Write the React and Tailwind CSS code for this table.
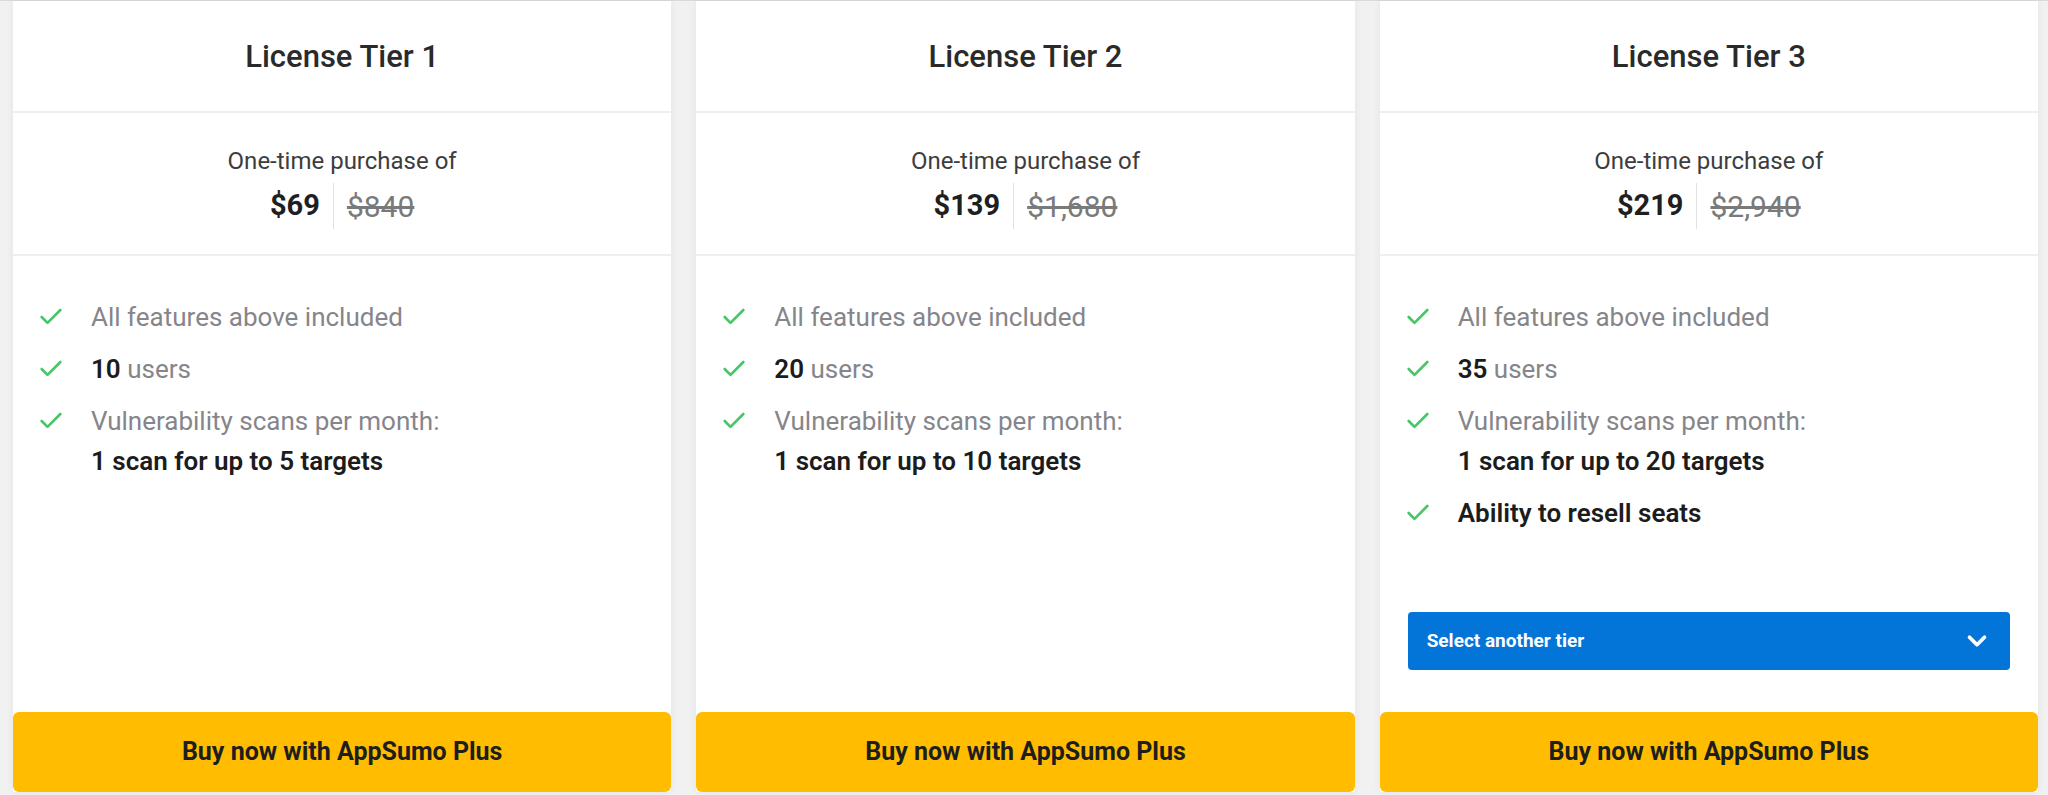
import { Check, ChevronDown } from 'lucide-react';

const tiers = [
  {
    name: 'License Tier 1',
    price: '$69',
    was: '$840',
    users: '10',
    scans: '1 scan for up to 5 targets',
  },
  {
    name: 'License Tier 2',
    price: '$139',
    was: '$1,680',
    users: '20',
    scans: '1 scan for up to 10 targets',
  },
  {
    name: 'License Tier 3',
    price: '$219',
    was: '$2,940',
    users: '35',
    scans: '1 scan for up to 20 targets',
    resell: true,
    select: true,
  },
];

const Feature = ({ children }) => (
  <li className="flex items-start">
    <Check className="w-[28px] h-[28px] mt-[6px] ml-[24px] text-[#45c765] shrink-0" strokeWidth={2.25} />
    <div className="ml-[26px] leading-[40px]">{children}</div>
  </li>
);

const TierCard = ({ tier }) => (
  <div className="flex-1 flex flex-col bg-white shadow-[0_0_8px_rgba(0,0,0,0.06)]">
    <div className="h-[112px] flex items-center justify-center border-b-2 border-[#efefef]">
      <h2 className="text-[31px] font-medium text-[#2a2a2a] mt-[2px]">{tier.name}</h2>
    </div>

    <div className="h-[143px] flex flex-col items-center pt-[34px] border-b-2 border-[#efefef]">
      <p className="text-[24px] text-[#3d3d3d] leading-[28px]">One-time purchase of</p>
      <div className="flex items-center mt-[8px]">
        <span className="text-[29px] font-bold text-[#1f1f1f]">{tier.price}</span>
        <span className="w-px h-[46px] bg-[#e2e2e2] mx-[13px]" />
        <span className="text-[30px] text-[#7a7a7a] line-through">{tier.was}</span>
      </div>
    </div>

    <ul className="flex-1 flex flex-col gap-[12px] pt-[41px] text-[26px] text-[#85858a]">
      <Feature>All features above included</Feature>
      <Feature>
        <span className="font-semibold text-[#1c1c1c]">{tier.users}</span> users
      </Feature>
      <Feature>
        Vulnerability scans per month:
        <br />
        <span className="font-semibold text-[#1c1c1c]">{tier.scans}</span>
      </Feature>
      {tier.resell && (
        <Feature>
          <span className="font-semibold text-[#1c1c1c]">Ability to resell seats</span>
        </Feature>
      )}
    </ul>

    {tier.select && (
      <div className="px-[28px] mb-[42px]">
        <button className="w-full h-[58px] rounded-[4px] bg-[#0374d8] flex items-center justify-between pl-[19px] pr-[18px] text-white">
          <span className="text-[19px] font-bold">Select another tier</span>
          <ChevronDown className="w-[30px] h-[30px]" strokeWidth={3} />
        </button>
      </div>
    )}

    <button className="h-[80px] w-full rounded-[6px] bg-[#ffbc00] text-[25px] font-bold text-[#1e1e1e]">
      Buy now with AppSumo Plus
    </button>
  </div>
);

export default function App() {
  return (
    <div
      className="w-[2048px] h-[795px] bg-[#f1f1f1] border-t border-[#d9d9d9] flex gap-[25px] pl-[13px] pr-[10px] pb-[3px]"
      style={{ fontFamily: 'Roboto, "Liberation Sans", sans-serif' }}
    >
      {tiers.map((tier) => (
        <TierCard key={tier.name} tier={tier} />
      ))}
    </div>
  );
}
